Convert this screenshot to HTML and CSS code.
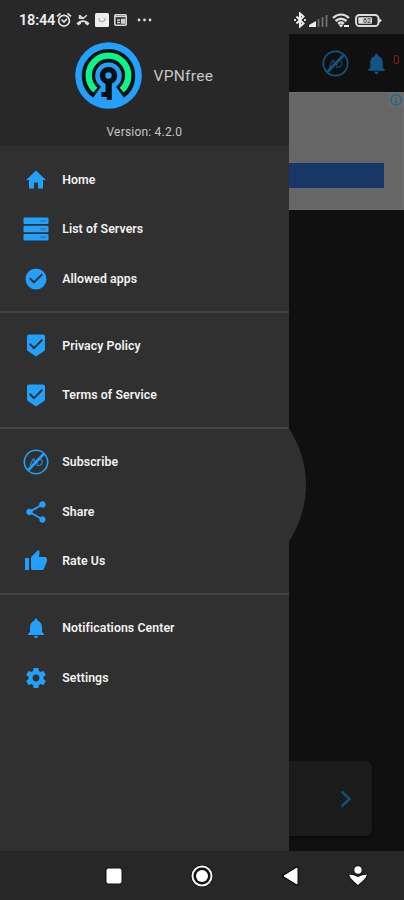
FILE: index.html
```html
<!DOCTYPE html>
<html lang="en">
<head>
<meta charset="utf-8">
<title>VPNfree</title>
<link rel="stylesheet" href="styles.css">
</head>
<body>
<svg class="defs" aria-hidden="true">
  <symbol id="noad" viewBox="0 0 26 26"><g fill="none" stroke="currentColor"><circle cx="13" cy="13" r="11.700" stroke-width="1.600"/><path d="M5.300 21L20.700 5" stroke-width="2.600"/><path d="M7 16.500l3-6.500h1.200v3M15.500 10c5-.8 5 6.500 0 6.500h-1.500v-3" stroke-width="1.200" opacity=".8"/></g></symbol>
  <symbol id="bell" viewBox="0 0 24 24"><path fill="currentColor" d="M12 22c1.100 0 2-.9 2-2h-4c0 1.100.9 2 2 2zm6-6v-5c0-3.070-1.640-5.640-4.500-6.320V4c0-.83-.67-1.500-1.500-1.500s-1.500.67-1.500 1.500v.68C7.630 5.360 6 7.920 6 11v5l-2 2v1h16v-1l-2-2z"/></symbol>
  <symbol id="shield" viewBox="0 0 24 24"><path fill="currentColor" d="M19 1H5c-1.100 0-1.990.9-1.990 2L3 15.930c0 .69.350 1.300.88 1.660L12 23l8.110-5.410c.53-.36.88-.97.88-1.660L21 3c0-1.100-.9-2-2-2zm-9 15l-5-5 1.410-1.410L10 13.170l7.590-7.590L19 7l-9 9z"/></symbol>
</svg>

<header class="status">
  <div class="status-left">
    <span class="clock">18:44</span>
    <svg class="alarm" viewBox="0 0 16 16"><g fill="none" stroke="#e4e4e4" stroke-width="1.700"><circle cx="8" cy="8.700" r="5.400"/><path d="M1 4.300L4.500 1.300M15 4.300l-3.500-3M5.500 7.500L8 10l3-3.300"/></g></svg>
    <svg class="missed" viewBox="0 0 14 12"><path d="M3.500 1v3.200h3M3.700 1.200L7 4.500l3.800-3.300" fill="none" stroke="#ddd" stroke-width="1.500"/><path d="M.5 9.500C4 5.300 10 5.300 13.500 9.500l-2 2L9 9.800V8.300H5v1.500l-2.500 1.700z" fill="#ddd"/></svg>
    <svg class="bag" viewBox="0 0 14 14"><rect width="14" height="14" rx="1.500" fill="#ededed"/><path d="M4 5c0 5 6 5 6 0" fill="none" stroke="#aaa" stroke-width="1.200"/></svg>
    <svg class="card-icon" viewBox="0 0 13 12"><rect x=".8" y=".8" width="11.400" height="10.400" rx="1" fill="none" stroke="#d7d7d7" stroke-width="1.600"/><path d="M1 2.500h11M3 6h3M3 8.500h3M7.500 5.500h3v3.500h-3z" stroke="#d7d7d7" stroke-width="1.300" fill="#bbb"/></svg>
    <svg class="dots" viewBox="0 0 15 4"><g fill="#ddd"><circle cx="2" cy="2" r="1.400"/><circle cx="7.500" cy="2" r="1.400"/><circle cx="13" cy="2" r="1.400"/></g></svg>
  </div>
  <div class="status-right">
    <svg class="bt" viewBox="0 0 12 16"><path d="M2.500 4.500l7 7L6 14.500v-13l3.500 3-7 7" fill="none" stroke="#eee" stroke-width="2"/><path d="M0 8h2M10 8h2" stroke="#ddd" stroke-width="1.800"/></svg>
    <svg class="signal" viewBox="0 0 19 13"><path d="M0 13v-2l7-4v6z" fill="#eee"/><path d="M9.500 5v8M13.500 3v10M17.500 1v12" stroke="#737373" stroke-width="1.700"/></svg>
    <svg class="wifi" viewBox="0 0 18 15"><g fill="none" stroke="#ddd" stroke-width="2.300"><path d="M1 5c5-4.500 11-4.500 16 0M3.500 8c4-3.300 7-3.300 11 0M6 10.700c2-1.600 4-1.600 6 0"/></g><path d="M6.500 11.500h5L9 14.500zM12 12h5v2h-5z" fill="#eee"/></svg>
    <svg class="battery" viewBox="0 0 27 13"><rect x="1" y="1" width="22.500" height="11" rx="3.500" fill="none" stroke="#ddd" stroke-width="1.900"/><rect x="3.300" y="3.300" width="13.700" height="6.400" rx="1" fill="#ddd"/><path d="M24 4l3 2.500L24 9z" fill="#ddd"/><text x="8" y="9" class="battery-text">62</text></svg>
  </div>
</header>

<main class="screen">
  <aside class="drawer">
    <div class="brand">
      <div class="brand-row">
        <svg class="logo" viewBox="0 0 67 67"><circle cx="33.500" cy="33.500" r="33.300" fill="#22a0fb"/><path d="M22 50.200A20 20 0 1 1 45 50.200" fill="none" stroke="#07110f" stroke-width="13.500"/><path d="M20.300 48.200A19.800 19.800 0 1 1 46.700 48.200" fill="none" stroke="#0bf58c" stroke-width="6.300"/><circle cx="33.500" cy="33.500" r="10.800" fill="none" stroke="#22a0fb" stroke-width="4"/><circle cx="33.500" cy="33.500" r="6" fill="#22a0fb" stroke="#07100f" stroke-width="5.600"/><path d="M30.500 40h6.300v18h-5v-3h-5.500v-5h4.200z" fill="#07100f"/></svg>
        <span class="name">VPNfree</span>
      </div>
      <div class="version">Version: 4.2.0</div>
    </div>
    <nav class="menu">
      <ul class="group">
        <li><svg viewBox="0 0 24 24"><path fill="currentColor" d="M10 20.500V14.500h4v6h5v-8.500h3L12 2.500 2 12h3v8.500z"/></svg><span>Home</span></li>
        <li><svg class="wide" viewBox="0 0 26 24"><g fill="currentColor"><rect x=".5" y=".5" width="25" height="6.600" rx="1"/><rect x=".5" y="8.700" width="25" height="6.600" rx="1"/><rect x=".5" y="16.900" width="25" height="6.600" rx="1"/></g><path d="M17 4h6M17 12h6M17 20h6" stroke="#246a9f" stroke-width="1.200"/></svg><span>List of Servers</span></li>
        <li><svg viewBox="0 0 24 24"><path fill="currentColor" d="M12 1.500a10.500 10.500 0 1 0 0 21 10.500 10.500 0 0 0 0-21zm-2 15.300l-5-5 1.400-1.400 3.600 3.600 7.600-7.600L19 7.800z"/></svg><span>Allowed apps</span></li>
      </ul>
      <ul class="group">
        <li><svg class="tall"><use href="#shield"/></svg><span>Privacy Policy</span></li>
        <li><svg class="tall"><use href="#shield"/></svg><span>Terms of Service</span></li>
      </ul>
      <ul class="group">
        <li><svg class="wide"><use href="#noad"/></svg><span>Subscribe</span></li>
        <li><svg viewBox="0 0 24 24"><path fill="currentColor" transform="translate(-1 -1) scale(1.080)" d="M18 16.080c-.76 0-1.440.3-1.960.77L8.910 12.700c.05-.23.090-.46.090-.7s-.04-.47-.09-.7l7.050-4.110c.54.5 1.250.81 2.040.81 1.660 0 3-1.340 3-3s-1.340-3-3-3-3 1.340-3 3c0 .24.040.47.090.7L8.040 9.810C7.500 9.310 6.790 9 6 9c-1.660 0-3 1.340-3 3s1.340 3 3 3c.79 0 1.500-.31 2.040-.81l7.120 4.160c-.05.21-.08.43-.08.65 0 1.610 1.310 2.920 2.920 2.920s2.920-1.310 2.920-2.920-1.310-2.920-2.920-2.920z"/></svg><span>Share</span></li>
        <li><svg viewBox="0 0 24 24"><path fill="currentColor" d="M1 21h4V9H1v12zm22-11c0-1.100-.9-2-2-2h-6.310l.95-4.570.03-.32c0-.41-.17-.79-.44-1.060L14.170 1 7.590 7.590C7.220 7.950 7 8.450 7 9v10c0 1.100.9 2 2 2h9c.83 0 1.540-.5 1.840-1.220l3.020-7.050c.09-.23.140-.47.140-.73v-2z"/></svg><span>Rate Us</span></li>
      </ul>
      <ul class="group">
        <li><svg><use href="#bell"/></svg><span>Notifications Center</span></li>
        <li><svg viewBox="0 0 24 24"><path fill="currentColor" d="M19.430 12.980c.04-.32.070-.64.070-.98s-.03-.66-.07-.98l2.110-1.650c.19-.15.240-.42.120-.64l-2-3.460c-.12-.22-.39-.3-.61-.22l-2.490 1c-.52-.4-1.080-.73-1.690-.98l-.38-2.650C14.460 2.180 14.250 2 14 2h-4c-.25 0-.46.180-.49.420l-.38 2.650c-.61.250-1.170.590-1.690.980l-2.490-1c-.23-.09-.49 0-.61.220l-2 3.460c-.13.220-.07.490.120.640l2.110 1.650c-.04.320-.07.650-.07.980s.03.660.070.980l-2.110 1.650c-.19.150-.24.420-.12.640l2 3.460c.12.220.39.300.61.220l2.490-1c.52.400 1.080.730 1.690.980l.38 2.650c.03.240.24.420.49.420h4c.25 0 .46-.18.490-.42l.38-2.650c.61-.25 1.170-.59 1.690-.98l2.490 1c.23.090.49 0 .61-.22l2-3.460c.12-.22.070-.49-.12-.64l-2.110-1.650zM12 15.500c-1.930 0-3.500-1.570-3.500-3.500s1.570-3.500 3.500-3.500 3.500 1.570 3.500 3.500-1.570 3.500-3.500 3.500z"/></svg><span>Settings</span></li>
      </ul>
    </nav>
    <svg class="bulge" viewBox="0 0 19 116"><path d="M0 0C24 36 24 80 0 116z" fill="#303030"/></svg>
  </aside>
  <section class="content">
    <div class="toolbar">
      <svg class="tool-ad"><use href="#noad"/></svg>
      <svg class="tool-bell"><use href="#bell"/></svg>
      <span class="count">0</span>
    </div>
    <div class="ad">
      <svg class="info" viewBox="0 0 14 14"><rect width="14" height="14" fill="#6c6c6c"/><circle cx="7" cy="7" r="5.300" fill="none" stroke="#1b6c80" stroke-width="1.500"/><path d="M7 4v1.300M7 6.300v4" stroke="#1b6c80" stroke-width="1.500"/></svg>
      <div class="ad-button"></div>
    </div>
    <div class="server-card"><svg viewBox="0 0 12 18"><path d="M1.500 1.500L9.500 9l-8 7.500" fill="none" stroke="#12507c" stroke-width="2.500"/></svg></div>
  </section>
</main>

<footer class="navbar">
  <svg class="recent" viewBox="0 0 20 20"><rect x="2" y="2" width="16" height="16" rx="2.500" fill="#fff" stroke="#111" stroke-width="1"/></svg>
  <svg class="home" viewBox="0 0 24 24"><circle cx="12" cy="12" r="11.300" fill="#111"/><circle cx="12" cy="12" r="9.500" fill="none" stroke="#f3f3f3" stroke-width="2"/><circle cx="12" cy="12" r="6" fill="#fff"/></svg>
  <svg class="back" viewBox="0 0 20 22"><path d="M2.500 11L16 2.800v16.400z" fill="#fff" stroke="#111" stroke-width="3.500" stroke-linejoin="round"/><path d="M3 11L16 3v16z" fill="#fff" stroke="#fff" stroke-linejoin="round"/></svg>
  <svg class="access" viewBox="0 0 20 22"><g fill="#fff" stroke="#111" stroke-width="2" stroke-linejoin="round" paint-order="stroke"><path d="M1 9.500Q6 9.500 10 12q4-2.500 9-2.500-1 4-5 7l-4 3.500-4-3.500q-4-3-5-7z"/><circle cx="10" cy="5" r="3.700"/></g></svg>
</footer>
</body>
</html>
```
FILE: styles.css
```css
* { box-sizing: border-box; }
body {
  margin: 0;
  width: 404px;
  height: 900px;
  overflow: hidden;
  display: flex;
  flex-direction: column;
  background: #101010;
  font-family: Roboto, "Liberation Sans", sans-serif;
}
svg { display: block; flex: none; }
.defs { display: none; }

.status {
  height: 34px;
  display: flex;
  justify-content: space-between;
  padding: 6px 22px 0 19px;
  background: #282828;
}
.status-left, .status-right { display: flex; align-items: center; height: 28px; }
.clock { width: 37px; font-size: 14.5px; font-weight: 600; letter-spacing: -.2px; color: #eee; white-space: nowrap; }
.alarm { width: 16px; height: 16px; }
.missed { width: 14px; height: 12px; margin-left: 4px; }
.bag { width: 14px; height: 14px; margin-left: 5px; }
.card-icon { width: 13px; height: 12px; margin-left: 5px; }
.dots { width: 15px; height: 4px; margin-left: 10px; }
.bt { width: 12px; height: 16px; }
.signal { width: 19px; height: 13px; margin-left: 3px; }
.wifi { width: 18px; height: 15px; margin-left: 4px; }
.battery { width: 27px; height: 13px; margin-left: 5px; }
.battery-text { font-size: 7px; font-weight: 700; fill: #555; }

.screen { height: 817px; display: flex; }
.drawer { position: relative; z-index: 1; width: 288.700px; flex: none; background: #303030; }
.brand { height: 112px; padding-top: 8px; background: #282828; color: #c6c6c6; }
.brand-row { display: flex; align-items: center; height: 67px; padding-left: 75px; }
.logo { width: 67px; height: 67px; }
.name { margin-left: 11.500px; font-size: 15.500px; letter-spacing: .3px; }
.version { margin-top: 15px; text-align: center; font-size: 12px; line-height: 16px; letter-spacing: .2px; }

.group { margin: 0; padding: 8.750px 0 7.500px; list-style: none; }
.group + .group { border-top: 2px solid #434343; padding-top: 8px; }
.group li { display: flex; align-items: center; height: 49.500px; padding-left: 23px; color: #22a0fb; }
.group li svg { width: 24px; height: 24px; margin: 0 .5px 0 .7px; }
.group li svg.wide { width: 26px; height: 26px; margin: 0 -.3px 0 -.5px; }
.group li svg.tall { height: 25px; }
.group span { margin-left: 14px; color: #f2f2f2; font-size: 12.300px; font-weight: 600; letter-spacing: .08px; white-space: nowrap; }
.bulge { position: absolute; left: 288px; top: 393px; width: 19px; height: 116px; }

.content { flex: 1; display: flex; flex-direction: column; background: #101010; }
.toolbar { height: 58px; display: flex; align-items: center; padding-left: 33.500px; color: #115584; }
.tool-ad { width: 27px; height: 27px; }
.tool-bell { width: 25px; height: 25px; margin-left: 15px; }
.count { margin: -7px 0 0 3.500px; font-size: 12px; color: #7b2020; }
.ad { height: 117.500px; border: solid #6d6d6d; border-width: 1px 1px 1px 0; background: #666; }
.info { width: 14px; height: 14px; margin-left: auto; }
.ad-button { width: 95.300px; height: 25px; margin-top: 56px; background: #193766; }
.server-card { width: 83px; height: 75px; margin-top: auto; margin-bottom: 15px; display: flex; align-items: center; padding-left: 51px; border-radius: 0 6px 6px 0; background: #1b1b1b; box-shadow: 0 2px 3px #0a0a0a; }
.server-card svg { width: 12px; height: 18px; }

.navbar { height: 49px; display: flex; align-items: center; padding-left: 104px; background: #272727; }
.recent { width: 20px; height: 20px; }
.home { width: 24px; height: 24px; margin-left: 66px; }
.back { width: 20px; height: 22px; margin-left: 67px; }
.access { width: 20px; height: 22px; margin-left: 47px; }
```
